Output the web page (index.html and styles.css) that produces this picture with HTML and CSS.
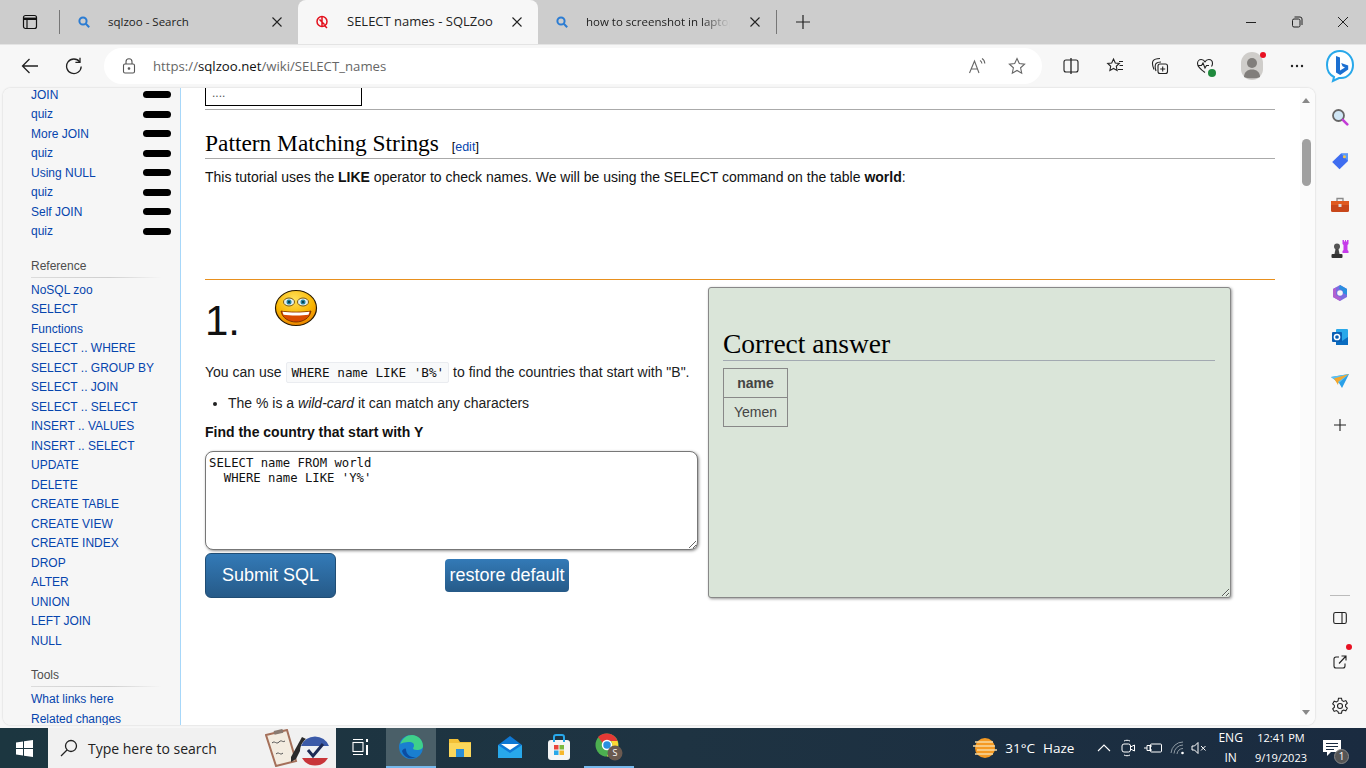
FILE: index.html
```html
<!DOCTYPE html>
<html lang="en">
<head>
	<meta charset="UTF-8">
	<title>SELECT names - SQLZoo</title>
	<link rel="stylesheet" href="styles.css">
</head>
<body>
	<!-- tab strip -->
	<div class="tabstrip">
		<div class="tab-menu"><svg width="16" height="16" viewBox="0 0 16 16" fill="none" stroke="#111" stroke-width="1.2"><rect x="1.5" y="1.5" width="13" height="13" rx="2"/><path d="M1.5 4.8h13" stroke-width="2.4"/><path d="M5 5v9.5"/></svg></div>
		<div class="tab-sep"></div>
		<div class="tab">
			<svg class="tab-icon" width="14" height="14" viewBox="0 0 14 14" fill="none" stroke="#2b7cd3" stroke-width="2"><circle cx="6" cy="6" r="3.6"/><path d="M8.8 8.8l3.4 3.4"/></svg>
			<span class="tab-title">sqlzoo - Search</span>
			<svg class="tab-x" width="10" height="10" viewBox="0 0 10 10" stroke="#222" stroke-width="1.1"><path d="M.5.5l9 9M9.5.5l-9 9"/></svg>
		</div>
		<div class="tab active">
			<svg class="tab-icon" width="14" height="14" viewBox="0 0 14 14" fill="none" stroke="#e3101c" stroke-width="1.5"><circle cx="7" cy="6.5" r="5"/><path d="M7 2v9M4.500 4.500l5 5M9 10l3 3"/></svg>
			<span class="tab-title">SELECT names - SQLZoo</span>
			<svg class="tab-x" width="10" height="10" viewBox="0 0 10 10" stroke="#222" stroke-width="1.1"><path d="M.5.5l9 9M9.5.5l-9 9"/></svg>
		</div>
		<div class="tab">
			<svg class="tab-icon" width="14" height="14" viewBox="0 0 14 14" fill="none" stroke="#2b7cd3" stroke-width="2"><circle cx="6" cy="6" r="3.6"/><path d="M8.8 8.8l3.4 3.4"/></svg>
			<span class="tab-title fade">how to screenshot in laptop</span>
			<svg class="tab-x" width="10" height="10" viewBox="0 0 10 10" stroke="#222" stroke-width="1.1"><path d="M.5.5l9 9M9.5.5l-9 9"/></svg>
		</div>
		<div class="tab-sep"></div>
		<div class="new-tab"><svg width="16" height="16" viewBox="0 0 16 16" stroke="#222" stroke-width="1.2"><path d="M8 1v14M1 8h14"/></svg></div>
		<div class="win-btns">
			<svg width="12" height="12" viewBox="0 0 12 12" stroke="#222"><path d="M1 6.500h10"/></svg>
			<svg width="12" height="12" viewBox="0 0 12 12" fill="none" stroke="#222"><rect x="1.500" y="3" width="7.500" height="8" rx="1.500"/><path d="M3.500 1h5.500a2 2 0 0 1 2 2v6"/></svg>
			<svg width="12" height="12" viewBox="0 0 12 12" stroke="#222"><path d="M1 1l10 10M11 1L1 11"/></svg>
		</div>
	</div>

	<!-- address bar -->
	<div class="toolbar">
		<svg class="tb-back" width="18" height="18" viewBox="0 0 18 18" fill="none" stroke="#222" stroke-width="1.3"><path d="M17 9H1.500M8.500 2L1.500 9l7 7"/></svg>
		<svg class="tb-reload" width="18" height="18" viewBox="0 0 18 18" fill="none" stroke="#222" stroke-width="1.3"><path d="M14.800 5A7.300 7.300 0 1 0 16.200 9.500"/><path d="M15 .8V5.400h-4.600"/></svg>
		<div class="address">
			<svg class="lock" width="14" height="16" viewBox="0 0 14 16" fill="none" stroke="#555" stroke-width="1.1"><rect x="1.500" y="6" width="11" height="9" rx="1.500"/><path d="M4 6V3.800a3 3 0 0 1 6 0V6"/><circle cx="7" cy="10.500" r=".8" fill="#555"/></svg>
			<span class="url">https://<b>sqlzoo.net</b>/wiki/SELECT_names</span>
			<svg class="addr-read" width="18" height="18" viewBox="0 0 18 18" fill="none" stroke="#666" stroke-width="1.1"><path d="M1.500 16L6.500 4l4.500 12M3.300 12h6.400M12 3.500c1.200.7 1.800 1.500 1.900 3M14 1.500c1.700 1 2.700 2.500 2.800 5"/></svg>
			<svg class="addr-star" width="18" height="18" viewBox="0 0 18 18" fill="none" stroke="#666" stroke-width="1.1"><path d="M9 1.500l2.300 5 5.300.6-4 3.700 1.100 5.400L9 13.500l-4.700 2.700 1.100-5.400-4-3.700 5.300-.6z"/></svg>
		</div>
		<div class="tb-icons">
			<svg width="16" height="16" viewBox="0 0 16 16" fill="none" stroke="#222" stroke-width="1.1"><rect x="1" y="2" width="14" height="12" rx="2"/><path d="M8 0v16" stroke-width="1.300"/></svg>
			<svg width="18" height="18" viewBox="0 0 18 18" fill="none" stroke="#222" stroke-width="1.1"><path d="M7.500 2l1.800 4 4 .5-3 2.800.8 4.200-3.600-2-3.600 2 .8-4.200-3-2.800 4-.5zM13 4.500h4M13.500 8.500h3.500M12 12.500h5"/></svg>
			<svg width="18" height="18" viewBox="0 0 18 18" fill="none" stroke="#222" stroke-width="1.1"><path d="M3 12.500C1.500 9 1 6 2 4c1-1.500 4-2.500 7-2.500"/><path d="M5 14c-1-3-1-6 0-7.500 1-1 3-1.500 5-1.500"/><rect x="7" y="7" width="9.500" height="9.500" rx="2"/><path d="M11.700 9.500v5M9.200 12h5"/></svg>
			<span class="ic-health"><svg width="18" height="18" viewBox="0 0 18 18" fill="none" stroke="#222" stroke-width="1.1"><path d="M9 15.500C4 12 1.500 9.500 1.500 6.500 1.500 4 3.300 2.500 5.200 2.500c1.600 0 3 .9 3.800 2.300.8-1.400 2.200-2.300 3.800-2.300 1.900 0 3.700 1.500 3.700 4 0 1-.3 2-1 3"/><path d="M2 8.500h3.500L7 6l2 5 1.500-2.500H13"/></svg><i class="health-dot"></i></span>
			<span class="avatar"><svg width="22" height="28" viewBox="0 0 22 28"><rect width="22" height="28" rx="11" fill="#cfcdca"/><circle cx="11" cy="11" r="5" fill="#817e7b"/><path d="M3 25c0-5 3.500-7.500 8-7.500s8 2.500 8 7.500c-2 1.800-14 1.800-16 0z" fill="#817e7b"/></svg><i class="red-dot"></i></span>
			<svg width="14" height="4" viewBox="0 0 14 4" fill="#222"><circle cx="2" cy="2" r="1.200"/><circle cx="7" cy="2" r="1.200"/><circle cx="12" cy="2" r="1.200"/></svg>
		</div>
		<svg class="bing" width="30" height="34" viewBox="0 0 30 34"><path d="M15 2C7 2 2 8 2 16c0 6 3 10 7 12l-1 4 6-3h2c7 0 12-6 12-13S23 2 15 2z" fill="#fff" stroke="#28a8ea" stroke-width="2"/><path d="M11 7l4 1.500v13l5-3-2.500-1.200-1.300-3.300 7 2.500v4L15.200 26 11 23.500z" fill="#1b6fd1"/></svg>
	</div>

	<div class="main">
		<div class="page">
			<!-- wiki sidebar -->
			<div class="wiki-nav">
				<ul class="nav-list scrolled">
					<li><a>JOIN</a><i class="pill"></i></li>
					<li><a>quiz</a><i class="pill"></i></li>
					<li><a>More JOIN</a><i class="pill"></i></li>
					<li><a>quiz</a><i class="pill"></i></li>
					<li><a>Using NULL</a><i class="pill"></i></li>
					<li><a>quiz</a><i class="pill"></i></li>
					<li><a>Self JOIN</a><i class="pill"></i></li>
					<li><a>quiz</a><i class="pill"></i></li>
				</ul>
				<h5>Reference</h5>
				<ul class="nav-list">
					<li><a>NoSQL zoo</a></li>
					<li><a>SELECT</a></li>
					<li><a>Functions</a></li>
					<li><a>SELECT .. WHERE</a></li>
					<li><a>SELECT .. GROUP BY</a></li>
					<li><a>SELECT .. JOIN</a></li>
					<li><a>SELECT .. SELECT</a></li>
					<li><a>INSERT .. VALUES</a></li>
					<li><a>INSERT .. SELECT</a></li>
					<li><a>UPDATE</a></li>
					<li><a>DELETE</a></li>
					<li><a>CREATE TABLE</a></li>
					<li><a>CREATE VIEW</a></li>
					<li><a>CREATE INDEX</a></li>
					<li><a>DROP</a></li>
					<li><a>ALTER</a></li>
					<li><a>UNION</a></li>
					<li><a>LEFT JOIN</a></li>
					<li><a>NULL</a></li>
				</ul>
				<h5 class="tools">Tools</h5>
				<ul class="nav-list">
					<li><a>What links here</a></li>
					<li><a>Related changes</a></li>
				</ul>
			</div>

			<!-- article -->
			<div class="article">
				<div class="prev-box">....</div>
				<hr class="rule first">
				<h2 class="section-head">Pattern Matching Strings <span class="edit">[<a>edit</a>]</span></h2>
				<p class="intro">This tutorial uses the <b>LIKE</b> operator to check names. We will be using the SELECT command on the table <b>world</b>:</p>
				<hr class="rule second">
				<div class="question">
					<div class="q-left">
						<div class="q-title">
							<h1>1.</h1>
							<svg class="smiley" width="44" height="38" viewBox="0 0 44 38">
								<defs><radialGradient id="face" cx=".45" cy=".25" r=".8"><stop offset="0" stop-color="#ffe15a"/><stop offset=".6" stop-color="#f9b500"/><stop offset="1" stop-color="#e87a00"/></radialGradient></defs>
								<ellipse cx="22" cy="19" rx="20.500" ry="17.500" fill="url(#face)" stroke="#2a1a00" stroke-width="1.200"/>
								<ellipse cx="15" cy="13" rx="5.500" ry="4" fill="#dfeef2" stroke="#7a5a10"/>
								<ellipse cx="29" cy="13" rx="5.500" ry="4" fill="#dfeef2" stroke="#7a5a10"/>
								<circle cx="15" cy="13" r="2.500" fill="#1f7f9c"/><circle cx="29" cy="13" r="2.500" fill="#1f7f9c"/>
								<circle cx="15" cy="13" r="1" fill="#042a36"/><circle cx="29" cy="13" r="1" fill="#042a36"/>
								<path d="M7 22c5 1.500 25 1.500 30 0-1 7-8 11-15 11S8 29 7 22z" fill="#d94a00" stroke="#6a2500" stroke-width=".8"/>
								<path d="M8.500 22.800c6 1 21 1 27 0l-1 3c-6 1-19 1-25 0z" fill="#fff"/>
							</svg>
						</div>
						<p class="q-text">You can use <code>WHERE name LIKE 'B%'</code> to find the countries that start with "B".</p>
						<ul class="q-list"><li>The % is a <em>wild-card</em> it can match any characters</li></ul>
						<p class="q-task">Find the country that start with Y</p>
						<textarea class="sql" readonly>SELECT name FROM world
  WHERE name LIKE 'Y%'</textarea>
						<div class="q-btns">
							<button class="btn submit">Submit SQL</button>
							<button class="btn restore">restore default</button>
						</div>
					</div>
					<div class="answer">
						<h2>Correct answer</h2>
						<table>
							<tr><th>name</th></tr>
							<tr><td>Yemen</td></tr>
						</table>
					</div>
				</div>
			</div>

			<!-- page scrollbar -->
			<div class="scrollbar">
				<i class="arrow up"></i>
				<div class="thumb"></div>
				<i class="arrow down"></i>
			</div>
		</div>

		<!-- edge sidebar -->
		<div class="edge-bar">
			<span class="slot"><svg width="18" height="18" viewBox="0 0 18 18"><circle cx="7.500" cy="7.500" r="5.500" fill="#cfe6f5" stroke="#666" stroke-width="1.800"/><path d="M11.800 11.800l4.500 4.500" stroke="#c33bd6" stroke-width="2.600" stroke-linecap="round"/></svg></span>
			<span class="slot"><svg width="18" height="18" viewBox="0 0 18 18"><path d="M1.200 10L10 1.500h7V9l-8.500 8.200z" fill="#3f6df0"/><path d="M10 1.500h7V9z" fill="#5b9bf8"/><circle cx="13.400" cy="4.800" r="1.500" fill="#f6c445"/></svg></span>
			<span class="slot"><svg width="18" height="16" viewBox="0 0 18 16"><path d="M6 4V1.500h6V4" fill="none" stroke="#8a8a8a" stroke-width="1.300"/><rect y="4" width="18" height="11" rx="1.500" fill="#c8471a"/><rect y="4" width="18" height="4" fill="#e05a20"/><rect x="7.500" y="7" width="3" height="3" fill="#ddd"/></svg></span>
			<span class="slot"><svg width="20" height="20" viewBox="0 0 20 20"><circle cx="7" cy="7.500" r="3" fill="#555"/><path d="M5.500 10h3l1 5h-5z" fill="#444"/><rect x="1.500" y="15" width="11" height="4" rx="1" fill="#333"/><path d="M12.500 1h1.500v1.500h1V1h1v1.500h1V1h1.500v4l-1 1v5l1 1v2h-6v-2l1-1V6l-1-1z" fill="#c63bea"/></svg></span>
			<span class="slot"><svg width="18" height="18" viewBox="0 0 18 18"><path d="M9 1l7 4v8l-7 4-7-4V5z" fill="#7a6ce0"/><path d="M9 1l7 4v6l-4-2V7L8 4.500z" fill="#2a8fe0"/><path d="M2 5l3-1.500V11l5 3-1 3-7-4z" fill="#b15fd0"/><circle cx="9" cy="9" r="2.800" fill="#f7f7f7"/></svg></span>
			<span class="slot"><svg width="18" height="18" viewBox="0 0 18 18"><rect x="5" y="1" width="12" height="16" rx="1" fill="#28a8ea"/><path d="M5 9l6 4 6-4v8H5z" fill="#0a6cc0"/><rect x="1" y="4" width="10" height="10" rx="1" fill="#0a5fb4"/><circle cx="6" cy="9" r="2.600" fill="none" stroke="#fff" stroke-width="1.500"/></svg></span>
			<span class="slot"><svg width="18" height="14" viewBox="0 0 18 14"><path d="M0 3l18-3-7 14-3-5z" fill="#2aa0e8"/><path d="M0 3l18-3L8 9z" fill="#5cc0f2"/><path d="M3 4.500L18 0 7.500 7.500 7 11z" fill="#f4a72b"/></svg></span>
			<span class="slot"><svg width="14" height="14" viewBox="0 0 14 14" stroke="#222" stroke-width="1.100"><path d="M7 1v12M1 7h12"/></svg></span>
			<div class="edge-spacer"></div>
			<div class="edge-line"></div>
			<span class="slot"><svg width="14" height="14" viewBox="0 0 14 14" fill="none" stroke="#222" stroke-width="1.100"><rect x=".7" y="1.500" width="12.600" height="11" rx="1.800"/><path d="M9 1.500v11"/></svg></span>
			<span class="slot edge-share"><svg width="14" height="14" viewBox="0 0 14 14" fill="none" stroke="#222" stroke-width="1.100"><path d="M6 2H3a2 2 0 0 0-2 2v7a2 2 0 0 0 2 2h7a2 2 0 0 0 2-2V8.500M6 8.500L13 1M8.500 1H13v4.500"/></svg><i class="red-dot share"></i></span>
			<span class="slot"><svg width="18" height="18" viewBox="0 0 18 18" fill="none" stroke="#222" stroke-width="1.100"><circle cx="9" cy="9" r="2.500"/><path d="M7.500 1.200h3l.5 2.300 1.600.9 2.200-.8 1.500 2.600-1.700 1.600v1.800l1.700 1.600-1.500 2.600-2.200-.8-1.600.9-.5 2.300h-3L7 14.500l-1.600-.9-2.200.8-1.500-2.600 1.700-1.600V8.400L1.700 6.800l1.500-2.600 2.200.8L7 4z"/></svg></span>
		</div>
	</div>

	<!-- windows taskbar -->
	<div class="taskbar">
		<div class="start"><svg width="17" height="17" viewBox="0 0 17 17" fill="#fff"><path d="M0 2.500l7-1v6.500H0zM8 1.300L17 0v8H8zM0 9h7v6.500l-7-1zM8 9h9v8l-9-1.300z"/></svg></div>
		<div class="search-box">
			<svg width="18" height="18" viewBox="0 0 18 18" fill="none" stroke="#222" stroke-width="1.300"><circle cx="11" cy="7" r="5.500"/><path d="M7 11l-6 6"/></svg>
			<span>Type here to search</span>
			<svg class="doodle" width="66" height="38" viewBox="0 0 66 38">
				<path d="M1 6L22 1l9 31-20 5z" fill="#f3ece0" stroke="#a5705a" stroke-width="2"/>
				<rect x="9" y="1" width="9" height="4" fill="#8a7a70" transform="rotate(-13 13 3)"/>
				<path d="M7 14c3-3 4 2 7-1s3 1 6-1M11 25c3-3 4 2 7-1" fill="none" stroke="#555"/>
				<path d="M26 28l11-20 4 2-10 20-5 3z" fill="#2a2a2a"/>
				<circle cx="50" cy="22" r="15" fill="#eef0f4"/>
				<path d="M36 17a15 15 0 0 1 28 0z" fill="#3b5aa8"/><path d="M37 29a15 15 0 0 0 26 0z" fill="#c8353a"/>
				<path d="M43 21l5 6 10-12" fill="none" stroke="#1d2a55" stroke-width="3"/>
			</svg>
		</div>
		<div class="task-icons">
			<span class="task-ic"><svg width="18" height="18" viewBox="0 0 18 18" fill="none" stroke="#fff" stroke-width="1.100"><path d="M1 1.500h10M1 16.500h10"/><rect x="1" y="4.500" width="10" height="9"/><path d="M15 1v3M15 7v10" stroke-width="2"/></svg></span>
			<span class="task-ic on"><svg width="26" height="26" viewBox="0 0 26 26"><circle cx="13" cy="13" r="12" fill="#1a7fd0"/><path d="M2 11C4 4 9 1 14 1c6 0 11 5 11 11 0 3-3 4-6 4-3 0-4-1-4-2 2-2 1-6-3-6-5 0-10 1-10 3z" fill="#3fd08a"/><path d="M8 15c0 5 4 9 10 8-5 3-12 1-14-6 1-2 3-3 4-2z" fill="#0c4da2"/></svg></span>
			<span class="task-ic"><svg width="24" height="22" viewBox="0 0 24 22"><path d="M1 3h9l2 3h11v15H1z" fill="#f2c037"/><rect x="1" y="7" width="22" height="14" fill="#fbd75b"/><rect x="8" y="13" width="8" height="8" fill="#2a8fd8"/></svg></span>
			<span class="task-ic"><svg width="24" height="24" viewBox="0 0 24 24"><path d="M12 1L0 10v13h24V10z" fill="#0f78d4"/><path d="M0 10l12 8 12-8v13H0z" fill="#28a8ea"/><path d="M3 9h18L12 15z" fill="#fff"/></svg></span>
			<span class="task-ic"><svg width="22" height="26" viewBox="0 0 22 26"><rect y="6" width="22" height="20" rx="3" fill="#f5f5f5"/><path d="M6 8V3a2 2 0 0 1 2-2h6a2 2 0 0 1 2 2v5" fill="none" stroke="#28a8ea" stroke-width="2"/><rect x="6" y="11" width="4.500" height="4.500" fill="#e8453c"/><rect x="11.500" y="11" width="4.500" height="4.500" fill="#7cb93e"/><rect x="6" y="16.500" width="4.500" height="4.500" fill="#28a8ea"/><rect x="11.500" y="16.500" width="4.500" height="4.500" fill="#f6b82d"/></svg></span>
			<span class="task-ic under"><svg width="28" height="28" viewBox="0 0 28 28"><circle cx="12" cy="12" r="11.500" fill="#4caf50"/><path d="M12 .5A11.500 11.500 0 0 1 22.500 8H12a4 4 0 0 0-4 2.500L3 4a11.500 11.500 0 0 1 9-3.500z" fill="#e53935"/><path d="M22.500 8A11.500 11.500 0 0 1 12 23.500L17 13a5 5 0 0 0-1-5z" fill="#fdd835"/><circle cx="12" cy="12" r="4.500" fill="#2a8fe0" stroke="#fff" stroke-width="1.500"/><circle cx="20" cy="20" r="7.500" fill="#6b5a50"/><text x="20" y="23" class="chrome-s">S</text></svg></span>
		</div>
		<div class="tray">
			<svg class="weather" width="26" height="22" viewBox="0 0 26 22"><circle cx="13" cy="11" r="10" fill="#f59a23"/><path d="M3 5h18M1 9h22M5 13h20M3 17h18" stroke="#f8d9a0" stroke-width="1.700"/></svg>
			<span class="temp">31°C</span>
			<span class="haze">Haze</span>
			<svg class="t-chev" width="14" height="8" viewBox="0 0 14 8" fill="none" stroke="#fff" stroke-width="1.100"><path d="M1 7l6-6 6 6"/></svg>
			<svg class="t-cam" width="15" height="18" viewBox="0 0 15 18" fill="none" stroke="#fff"><rect x="1" y="5" width="8.500" height="8" rx="2"/><path d="M9.500 8l4-2v6l-4-2M3 2c2-1 4-1 6 0M3 16c2 1 4 1 6 0"/></svg>
			<svg class="t-plug" width="18" height="12" viewBox="0 0 18 12" fill="none" stroke="#fff"><rect x="6.500" y="2" width="11" height="8" rx="1"/><path d="M0 6h3M3 3.500h3v5H3zM6 4h2M6 8h2"/></svg>
			<svg class="t-wifi" width="16" height="14" viewBox="0 0 16 14" fill="none" stroke="#8f9aa3"><path d="M1 12A12 12 0 0 1 13 1M4 12.500a9 9 0 0 1 9-8.500M7 13a6 6 0 0 1 6-5.500"/><circle cx="12.500" cy="12" r="1.300" fill="#fff" stroke="none"/></svg>
			<svg class="t-vol" width="16" height="14" viewBox="0 0 16 14" fill="none" stroke="#fff"><path d="M1 5v4h2.500L7 12.500v-11L3.500 5zM10 5l4.500 4.500M14.500 5L10 9.500"/></svg>
			<div class="t-lang"><span>ENG</span><span>IN</span></div>
			<div class="t-clock"><span>12:41 PM</span><span>9/19/2023</span></div>
			<span class="t-note"><svg width="18" height="16" viewBox="0 0 18 16"><path d="M0 0h18v12H8l-4 4v-4H0z" fill="#fff"/><path d="M3 3.500h12M3 6.500h12M3 9.500h8" stroke="#1a2b40"/></svg><i class="note-badge">1</i></span>
		</div>
	</div>
</body>
</html>
```

FILE: styles.css
```css
*{
	margin: 0;
	padding: 0;
	box-sizing: border-box;
	list-style-type: none;
}
html, body{
	width: 1366px;
	height: 768px;
	overflow: hidden;
}
body{
	display: flex;
	flex-direction: column;
	background-color: #f7f7f7;
	font-family: "Liberation Sans", Arial, sans-serif;
	color: #202122;
}
svg{
	display: block;
	flex: none;
}
i{
	font-style: normal;
}

/* tab strip */
.tabstrip{
	display: flex;
	align-items: center;
	height: 44px;
	background-color: #cdcdcd;
	font-family: "Open Sans", sans-serif;
	font-size: 11.5px;
	color: #222;
}
.tab-menu{
	display: flex;
	justify-content: center;
	width: 59px;
}
.tab-sep{
	width: 1px;
	height: 24px;
	background-color: #777;
}
.tab{
	position: relative;
	display: flex;
	align-items: center;
	width: 238px;
	height: 44px;
	padding-left: 17px;
}
.tab.active{
	width: 240px;
	background-color: #f7f7f7;
	border-radius: 8px 8px 0 0;
	font-size: 13px;
}
.tab-title{
	width: 156px;
	margin-top: -2px;
	margin-left: 17px;
	white-space: nowrap;
	overflow: hidden;
}
.tab.active .tab-title{
	width: 152px;
	margin-left: 18px;
}
.tab-title.fade{
	width: 144px;
	-webkit-mask-image: linear-gradient(to right, #000 80%, transparent 100%);
	mask-image: linear-gradient(to right, #000 80%, transparent 100%);
}
.tab-x{
	position: absolute;
	right: 16px;
	top: 17px;
}
.new-tab{
	margin-left: 18px;
}
.win-btns{
	display: flex;
	gap: 34px;
	margin-left: auto;
	margin-right: 17px;
}

/* address bar */
.toolbar{
	display: flex;
	align-items: center;
	height: 44px;
	padding-left: 21px;
	background-color: #f7f7f7;
	box-shadow: inset 0 1px #e4e4e4;
}
.tb-reload{
	margin-left: 26px;
}
.address{
	display: flex;
	align-items: center;
	width: 938px;
	height: 36px;
	margin-left: 21px;
	padding-left: 18px;
	background-color: #fff;
	border-radius: 18px;
}
.url{
	margin-left: 17px;
	font-family: "Open Sans", sans-serif;
	font-size: 13.2px;
	color: #666;
}
.url b{
	font-weight: 400;
	color: #111;
}
.addr-read{
	margin-left: auto;
}
.addr-star{
	margin-left: 22px;
	margin-right: 16px;
}
.tb-icons{
	display: flex;
	align-items: center;
	gap: 27px;
	margin-left: 21px;
}
.ic-health, .avatar{
	position: relative;
	display: block;
}
.health-dot{
	position: absolute;
	right: -2px;
	bottom: -2px;
	width: 8px;
	height: 8px;
	border-radius: 50%;
	background-color: #1f8a3d;
}
.red-dot{
	position: absolute;
	right: -3px;
	top: 0;
	width: 6px;
	height: 6px;
	border-radius: 50%;
	background-color: #e81123;
}
.bing{
	margin-left: 21px;
}

/* page */
.main{
	display: flex;
	height: 640px;
}
.page{
	display: flex;
	width: 1312px;
	height: 637px;
	margin-left: 3px;
	background-color: #fff;
	border-radius: 8px;
	box-shadow: 0 0 2px rgba(0,0,0,0.2);
	overflow: hidden;
}
.wiki-nav{
	width: 178px;
	padding-left: 28px;
	padding-right: 9px;
	background-color: #f6f6f6;
	border-right: 1px solid #a7d7f9;
	font-size: 12px;
	flex: none;
	overflow: hidden;
}
.nav-list li{
	display: flex;
	align-items: center;
	justify-content: space-between;
	height: 19.5px;
}
.nav-list.scrolled{
	margin-top: -3px;
}
.nav-list a{
	color: #0645ad;
}
.pill{
	width: 28px;
	height: 7px;
	border-radius: 4px;
	background-color: #000;
}
.wiki-nav h5{
	width: 130px;
	margin-top: 17px;
	margin-bottom: 2px;
	padding-bottom: 3px;
	font-size: 12px;
	font-weight: 400;
	line-height: 16px;
	color: #4d4d4d;
	border-bottom: 1px solid;
	border-image: linear-gradient(to right, #dcdcdc, #cfcfcf 60%, #f6f6f6) 1;
}
.wiki-nav h5.tools{
	margin-top: 16px;
	margin-bottom: 3px;
}

/* article */
.article{
	width: 1119px;
	padding: 0 25px 0 24px;
	flex: none;
}
.prev-box{
	width: 157px;
	height: 18px;
	padding-left: 6px;
	border: 1px solid #000;
	border-top: none;
	font-size: 12px;
	line-height: 10px;
	color: #555;
}
.rule{
	height: 1px;
	border: none;
	background-color: #aaa;
}
.rule.first{
	margin-top: 3px;
}
.rule.second{
	margin-top: 93px;
	background-color: #e8901e;
}
.section-head{
	margin-top: 19px;
	padding-bottom: 1px;
	border-bottom: 1px solid #aaa;
	font-family: "Liberation Serif", serif;
	font-size: 23.4px;
	font-weight: 400;
	line-height: 28px;
	color: #000;
}
.edit{
	margin-left: 7px;
	font-family: "Liberation Sans", sans-serif;
	font-size: 12.5px;
	line-height: 1;
}
.edit a{
	color: #0645ad;
}
.intro{
	margin-top: 9px;
	font-size: 14px;
	line-height: 18px;
	color: #111;
}
.question{
	display: flex;
	gap: 10px;
	margin-top: 7px;
}
.q-left{
	width: 493px;
	flex: none;
	font-size: 14px;
}
.q-title{
	display: flex;
	height: 57px;
}
.q-title h1{
	width: 69px;
	margin-top: 10px;
	font-size: 42px;
	font-weight: 400;
	line-height: 48px;
	color: #111;
}
.smiley{
	margin-top: 2px;
}
.q-text{
	margin-top: 16px;
	line-height: 24px;
}
.q-text code{
	display: inline-block;
	height: 21px;
	margin-left: 1px;
	padding: 0 4px;
	background-color: #f8f9fa;
	border: 1px solid #eaecf0;
	border-radius: 2px;
	font-family: "DejaVu Sans Mono", monospace;
	font-size: 12.7px;
	line-height: 19px;
	color: #111;
}
.q-list{
	margin-top: 10px;
	padding-left: 23px;
}
.q-list li{
	list-style-type: disc;
	line-height: 18px;
}
.q-task{
	margin-top: 11px;
	font-weight: 700;
	line-height: 18px;
	color: #111;
}
.sql{
	display: block;
	width: 493px;
	height: 99px;
	margin-top: 10px;
	padding: 4px 3px;
	border: 1px solid #777;
	border-radius: 8px;
	box-shadow: 1px 1px 3px rgba(0,0,0,0.45);
	font-family: "DejaVu Sans Mono", monospace;
	font-size: 12.25px;
	line-height: 15px;
	color: #111;
	outline: none;
	resize: both;
}
.q-btns{
	display: flex;
	align-items: center;
	gap: 109px;
	margin-top: 3px;
}
.btn{
	background-image: linear-gradient(#337ab7, #265a88);
	color: #fff;
	font-family: "Liberation Sans", sans-serif;
	font-size: 18px;
}
.submit{
	width: 131px;
	height: 45px;
	border: 1px solid #204d74;
	border-radius: 6px;
}
.restore{
	width: 124px;
	height: 33px;
	border: none;
	border-radius: 4px;
}
.answer{
	width: 523px;
	height: 311px;
	padding: 0 15px 0 14px;
	background-color: #dae5d9;
	border: 1px solid #888;
	border-radius: 3px;
	box-shadow: 1px 1px 3px rgba(0,0,0,0.4);
	overflow: auto;
	resize: both;
}
.answer h2{
	margin-top: 41px;
	padding-bottom: 1px;
	border-bottom: 1px solid #a2a9b1;
	font-family: "Liberation Serif", serif;
	font-size: 27.5px;
	font-weight: 400;
	line-height: 30px;
	color: #000;
}
.answer table{
	margin-top: 7px;
	border-collapse: collapse;
	font-size: 14px;
	color: #444;
}
.answer th, .answer td{
	width: 64px;
	height: 29px;
	border: 1px solid #888;
	text-align: center;
}

/* scrollbar */
.scrollbar{
	position: relative;
	width: 15px;
	flex: none;
	background-color: #fbfbfb;
}
.thumb{
	width: 9px;
	height: 47px;
	margin: 51px 0 0 2px;
	border-radius: 5px;
	background-color: #a0a0a0;
}
.arrow{
	position: absolute;
	left: 2px;
	width: 0;
	height: 0;
	border-left: 4.5px solid transparent;
	border-right: 4.5px solid transparent;
}
.arrow.up{
	top: 10px;
	border-bottom: 5px solid #888;
}
.arrow.down{
	bottom: 10px;
	border-top: 5px solid #888;
}

/* edge sidebar */
.edge-bar{
	display: flex;
	flex-direction: column;
	align-items: center;
	width: 50px;
	padding-top: 7px;
}
.slot{
	display: flex;
	align-items: center;
	justify-content: center;
	height: 44px;
	flex: none;
}
.edge-spacer{
	height: 148px;
	flex: none;
}
.edge-line{
	width: 20px;
	height: 1px;
	background-color: #bbb;
	flex: none;
}
.edge-share{
	position: relative;
}
.red-dot.share{
	right: -5px;
	top: 4px;
}

/* taskbar */
.taskbar{
	display: flex;
	align-items: center;
	height: 40px;
	background-image: linear-gradient(to right, #1c3640, #1e3342 50%, #1a2b40);
	color: #fff;
	font-family: "Open Sans", sans-serif;
}
.start{
	display: flex;
	justify-content: center;
	width: 48px;
}
.search-box{
	display: flex;
	align-items: center;
	width: 288px;
	height: 40px;
	padding-left: 12px;
	background-color: #f1f1f1;
	color: #222;
	font-size: 14px;
}
.search-box span{
	margin-left: 10px;
}
.doodle{
	margin-left: auto;
	margin-right: 5px;
}
.task-icons{
	display: flex;
	height: 40px;
}
.task-ic{
	display: flex;
	align-items: center;
	justify-content: center;
	width: 49.5px;
	height: 40px;
	border-bottom: 2px solid transparent;
}
.task-ic:first-child{
	width: 50px;
}
.task-ic.on{
	background-color: #4a5f68;
	border-bottom-color: #76b9ed;
}
.task-ic.under{
	border-bottom-color: #76b9ed;
}
.chrome-s{
	fill: #fff;
	font-family: "Open Sans", sans-serif;
	font-size: 9px;
	text-anchor: middle;
}
.tray{
	display: flex;
	align-items: center;
	margin-left: auto;
	padding-right: 25px;
	font-size: 12px;
}
.temp{
	margin-left: 7px;
	font-size: 13.5px;
}
.haze{
	margin-left: 8px;
	font-size: 13.5px;
}
.t-chev{
	margin-left: 23px;
}
.t-cam{
	margin-left: 10px;
}
.t-plug{
	margin-left: 8px;
}
.t-wifi{
	margin-left: 8px;
}
.t-vol{
	margin-left: 5px;
}
.t-lang, .t-clock{
	display: flex;
	flex-direction: column;
	align-items: center;
	line-height: 20px;
}
.t-lang{
	margin-left: 11px;
}
.t-clock{
	margin-left: 12px;
	font-size: 11px;
}
.t-note{
	position: relative;
	display: block;
	margin-left: 16px;
}
.note-badge{
	position: absolute;
	right: -8px;
	bottom: -8px;
	width: 15px;
	height: 15px;
	border-radius: 50%;
	background-color: #555;
	border: 1px solid #888;
	font-size: 10px;
	line-height: 13px;
	text-align: center;
}
```
